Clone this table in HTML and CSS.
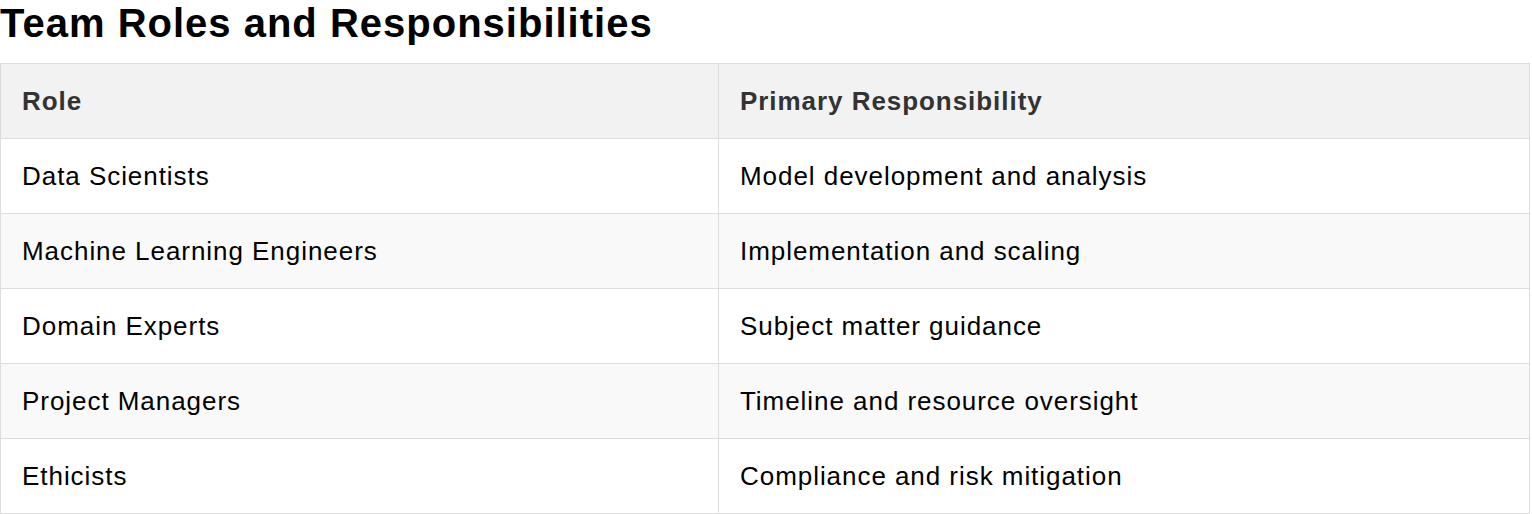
FILE: index.html
```html
<!DOCTYPE html>
<html lang="en">
<head>
<meta charset="utf-8">
<title>Team Roles and Responsibilities</title>
<link rel="stylesheet" href="styles.css">
</head>
<body>
<h1 class="title">Team Roles and Responsibilities</h1>
<table class="roles">
  <colgroup><col class="col-role"><col class="col-resp"></colgroup>
  <thead>
    <tr><th>Role</th><th>Primary Responsibility</th></tr>
  </thead>
  <tbody>
    <tr><td>Data Scientists</td><td>Model development and analysis</td></tr>
    <tr><td>Machine Learning Engineers</td><td>Implementation and scaling</td></tr>
    <tr><td>Domain Experts</td><td>Subject matter guidance</td></tr>
    <tr><td>Project Managers</td><td>Timeline and resource oversight</td></tr>
    <tr><td>Ethicists</td><td>Compliance and risk mitigation</td></tr>
  </tbody>
</table>
</body>
</html>
```
FILE: styles.css
```css
html, body {
  margin: 0;
  padding: 0;
  background: #ffffff;
}
body {
  font-family: "Liberation Sans", Arial, sans-serif;
  color: #000;
}
.title {
  font-size: 40px;
  font-weight: bold;
  letter-spacing: 1px;
  margin: 0 0 17px 0;
  line-height: 46px;
}
.roles {
  width: 1530px;
  border-collapse: collapse;
  table-layout: fixed;
  font-size: 26px;
  letter-spacing: 0.95px;
}
.col-role { width: 718px; }
.roles th, .roles td {
  border: 1px solid #dddddd;
  padding: 20px 20px 20px 21px;
  line-height: 34px;
  text-align: left;
}
.roles th {
  background: #f2f2f2;
  color: #333333;
  font-weight: bold;
}
.roles tbody tr:nth-child(even) td {
  background: #f9f9f9;
}
```
